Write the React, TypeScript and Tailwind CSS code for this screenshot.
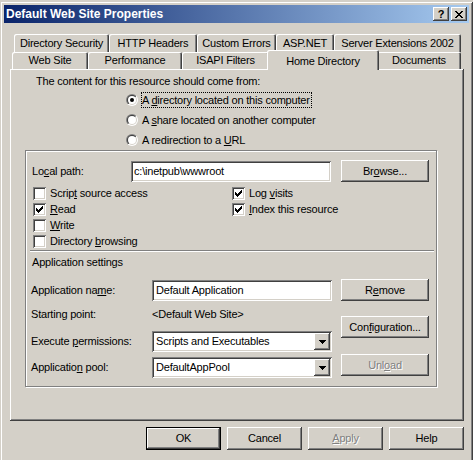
import React from 'react'

// classic 3D edges
const raised = 'shadow-[inset_-1px_-1px_#404040,inset_1px_1px_#fff,inset_-2px_-2px_#808080]'
const sunken = 'shadow-[inset_1px_1px_#808080,inset_-1px_-1px_#fff,inset_2px_2px_#404040,inset_-2px_-2px_#d4d0c8]'
const defaultRaised = 'shadow-[inset_0_0_0_1px_#000,inset_-2px_-2px_#404040,inset_2px_2px_#fff,inset_-3px_-3px_#808080]'
const tabEdge = 'shadow-[inset_1px_1px_#fff,inset_-1px_0_#404040,inset_-2px_0_#808080]'

function U({ children }: { children: React.ReactNode }) {
  return <span className="underline decoration-1 underline-offset-[1px]">{children}</span>
}

function Pixels({ rows, color = '#000' }: { rows: string[]; color?: string }) {
  const w = rows[0].length
  const h = rows.length
  return (
    <svg width={w} height={h} viewBox={`0 0 ${w} ${h}`} shapeRendering="crispEdges">
      {rows.flatMap((row, y) =>
        row.split('').map((c, x) =>
          c === '#' ? <rect key={`${x}-${y}`} x={x} y={y} width={1} height={1} fill={color} /> : null
        )
      )}
    </svg>
  )
}

const closeGlyph = ['##....##', '.##..##.', '..####..', '...##...', '..####..', '.##..##.', '##....##']
const checkGlyph = ['......#', '.....##', '#...###', '##.###.', '#####..', '.###...', '..#....']
const arrowGlyph = ['#######', '.#####.', '..###..', '...#...']

function Radio({ checked }: { checked?: boolean }) {
  return (
    <svg width="12" height="12" viewBox="0 0 12 12" className="shrink-0">
      <defs>
        <linearGradient id="radio-outer" x1="0" y1="0" x2="1" y2="1">
          <stop offset="0.5" stopColor="#808080" />
          <stop offset="0.5" stopColor="#ffffff" />
        </linearGradient>
        <linearGradient id="radio-inner" x1="0" y1="0" x2="1" y2="1">
          <stop offset="0.5" stopColor="#404040" />
          <stop offset="0.5" stopColor="#d4d0c8" />
        </linearGradient>
      </defs>
      <circle cx="6" cy="6" r="6" fill="url(#radio-outer)" />
      <circle cx="6" cy="6" r="5" fill="url(#radio-inner)" />
      <circle cx="6" cy="6" r="4" fill="#fff" />
      {checked && <circle cx="6" cy="6" r="2" fill="#000" />}
    </svg>
  )
}

function Check({ checked, children }: { checked?: boolean; children: React.ReactNode }) {
  return (
    <div className="h-[16px] flex items-center gap-[4px]">
      <div className={`w-[13px] h-[13px] bg-white ${sunken} flex items-center justify-center shrink-0`}>
        {checked && <Pixels rows={checkGlyph} />}
      </div>
      <span className="leading-[13px]">{children}</span>
    </div>
  )
}

function Button({
  children,
  className = '',
  isDefault = false,
  disabled = false,
}: {
  children: React.ReactNode
  className?: string
  isDefault?: boolean
  disabled?: boolean
}) {
  return (
    <div
      className={`flex items-center justify-center bg-[#d4d0c8] ${isDefault ? defaultRaised : raised} ${
        disabled ? 'text-[#808080] [text-shadow:1px_1px_#fff]' : 'text-black'
      } ${className}`}
    >
      <span>{children}</span>
    </div>
  )
}

function Select({ value }: { value: string }) {
  return (
    <div className={`w-[180px] h-[21px] bg-white ${sunken} flex items-center pl-[4px] pr-[2px]`}>
      <span className="flex-1">{value}</span>
      <div className={`w-[16px] h-[17px] bg-[#d4d0c8] ${raised} flex items-center justify-center`}>
        <Pixels rows={arrowGlyph} />
      </div>
    </div>
  )
}

function Tab({ label, width, height }: { label: string; width: string; height: string }) {
  return (
    <div className={`${width} ${height} ${tabEdge} rounded-t-[2px] bg-[#d4d0c8] flex items-center justify-center`}>
      {label}
    </div>
  )
}

function RadioRow({ checked, focused, children }: { checked?: boolean; focused?: boolean; children: React.ReactNode }) {
  return (
    <div className="h-[20px] pl-[116px] flex items-center gap-[3px]">
      <Radio checked={checked} />
      <span
        className={`block h-[16px] leading-[14px] pr-[1px] border border-dotted ${
          focused ? 'border-black' : 'border-transparent'
        }`}
      >
        {children}
      </span>
    </div>
  )
}

export default function App() {
  return (
    <div className="w-[473px] h-[460px] overflow-hidden bg-[#d4d0c8] pt-[1px] font-['Tahoma','Liberation_Sans',Arial,sans-serif] text-[11px] text-black tracking-[-0.2px]">
      <div className="w-[473px] h-[461px] p-[4px] flex flex-col shadow-[inset_1px_1px_#d4d0c8,inset_-1px_-1px_#404040,inset_2px_2px_#fff,inset_-2px_-2px_#808080]">
        {/* title bar */}
        <div className="h-[18px] shrink-0 flex items-center bg-[linear-gradient(to_right,#0a246a,#a6caf0)] pl-[2px] pr-[2px]">
          <span className="flex-1 text-white font-bold text-[12px] tracking-normal">Default Web Site Properties</span>
          <div className={`w-[16px] h-[14px] bg-[#d4d0c8] ${raised} flex items-center justify-center font-bold text-[11px] leading-none`}>
            ?
          </div>
          <div className={`ml-[2px] w-[16px] h-[14px] bg-[#d4d0c8] ${raised} flex items-center justify-center`}>
            <Pixels rows={closeGlyph} />
          </div>
        </div>

        {/* tabs */}
        <div className="mt-[11px] ml-[10px] flex h-[18px]">
          <Tab label="Directory Security" width="w-[95px]" height="h-[18px]" />
          <Tab label="HTTP Headers" width="w-[88px]" height="h-[18px]" />
          <Tab label="Custom Errors" width="w-[79px]" height="h-[18px]" />
          <Tab label="ASP.NET" width="w-[58px]" height="h-[18px]" />
          <Tab label="Server Extensions 2002" width="w-[127px]" height="h-[18px]" />
        </div>
        <div className="ml-[8px] flex h-[17px] items-end relative z-10">
          <Tab label="Web Site" width="w-[76px]" height="h-[17px]" />
          <Tab label="Performance" width="w-[94px]" height="h-[17px]" />
          <Tab label="ISAPI Filters" width="w-[87px]" height="h-[17px]" />
          <div
            className={`ml-[-2px] mr-[-2px] mb-[-1px] w-[112px] h-[20px] ${tabEdge} rounded-t-[2px] bg-[#d4d0c8] flex justify-center pt-[3px] relative z-10`}
          >
            Home Directory
          </div>
          <Tab label="Documents" width="w-[84px]" height="h-[17px]" />
        </div>

        {/* panel */}
        <div className={`ml-[6px] w-[454px] h-[352px] shrink-0 ${raised} flex flex-col`}>
          <div className="pl-[26px] mt-[6px] h-[13px] leading-[13px]">The content for this resource should come from:</div>
          <div className="mt-[2px] flex flex-col">
            <RadioRow checked focused>
              A <U>d</U>irectory located on this computer
            </RadioRow>
            <RadioRow>
              A <U>s</U>hare located on another computer
            </RadioRow>
            <RadioRow>
              A redirection to a <U>U</U>RL
            </RadioRow>
          </div>

          {/* group */}
          <div className="ml-[15px] w-[412px] h-[237px] border border-[#808080] shadow-[inset_1px_1px_#fff,1px_1px_#fff] flex flex-col">
            <div className="mt-[9px] h-[22px] pl-[6px] flex items-center">
              <span className="w-[99px]">
                Lo<U>c</U>al path:
              </span>
              <div className={`w-[200px] h-[21px] bg-white ${sunken} flex items-center pl-[3px]`}>c:\inetpub\wwwroot</div>
              <Button className="ml-[10px] w-[88px] h-[22px]">
                Br<U>o</U>wse...
              </Button>
            </div>

            <div className="mt-[3px] pl-[7px] grid grid-cols-[199px_1fr]">
              <div className="flex flex-col">
                <Check>
                  Scrip<U>t</U> source access
                </Check>
                <Check checked>
                  <U>R</U>ead
                </Check>
                <Check>
                  <U>W</U>rite
                </Check>
                <Check>
                  Directory <U>b</U>rowsing
                </Check>
              </div>
              <div className="flex flex-col">
                <Check checked>
                  Log <U>v</U>isits
                </Check>
                <Check checked>
                  <U>I</U>ndex this resource
                </Check>
              </div>
            </div>

            <div className="mt-[1px] ml-[4px] w-[404px] h-[2px] border-t border-[#808080] border-b border-b-white" />

            <div className="mt-[4px] pl-[6px] h-[13px] leading-[13px]">Application settings</div>

            <div className="mt-[10px] flex">
              <div className="pl-[5px] flex flex-col">
                <div className="h-[22px] flex items-center">
                  <span className="w-[121px]">
                    Application na<U>m</U>e:
                  </span>
                  <div className={`w-[180px] h-[21px] bg-white ${sunken} flex items-center pl-[4px]`}>Default Application</div>
                </div>
                <div className="mt-[7px] h-[13px] flex items-center">
                  <span className="w-[121px]">Starting point:</span>
                  <span>&lt;Default Web Site&gt;</span>
                </div>
                <div className="mt-[10px] h-[21px] flex items-center">
                  <span className="w-[121px]">
                    Execute <U>p</U>ermissions:
                  </span>
                  <Select value="Scripts and Executables" />
                </div>
                <div className="mt-[5px] h-[21px] flex items-center">
                  <span className="w-[121px]">
                    Applicatio<U>n</U> pool:
                  </span>
                  <Select value="DefaultAppPool" />
                </div>
              </div>
              <div className="ml-[9px] flex flex-col">
                <Button className="w-[88px] h-[22px]">
                  R<U>e</U>move
                </Button>
                <Button className="mt-[15px] w-[88px] h-[22px]">
                  Con<U>f</U>iguration...
                </Button>
                <Button disabled className="mt-[16px] w-[88px] h-[22px]">
                  Unl<U>o</U>ad
                </Button>
              </div>
            </div>
          </div>
        </div>

        {/* dialog buttons */}
        <div className="mt-[6px] ml-[142px] flex gap-[6px]">
          <Button isDefault className="w-[75px] h-[23px]">
            OK
          </Button>
          <Button className="w-[75px] h-[23px]">Cancel</Button>
          <Button disabled className="w-[75px] h-[23px]">
            <U>A</U>pply
          </Button>
          <Button className="w-[75px] h-[23px]">Help</Button>
        </div>
      </div>
    </div>
  )
}
